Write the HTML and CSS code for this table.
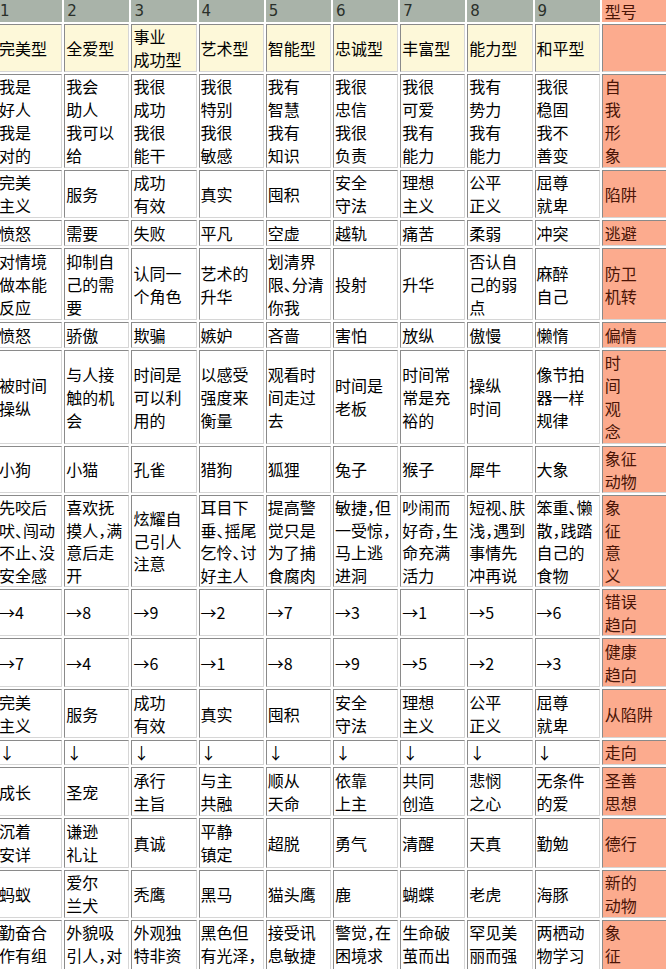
FILE: index.html
```html
<!DOCTYPE html>
<html lang="zh-CN">
<head>
<meta charset="utf-8">
<title>九型人格</title>
<link rel="stylesheet" href="styles.css">
</head>
<body>
<table class="grid">
<tr class="hd">
<td>1</td><td>2</td><td>3</td><td>4</td><td>5</td><td>6</td><td>7</td><td>8</td><td>9</td><td class="k">型号</td>
</tr>
<tr class="ty">
<td>完美型</td><td>全爱型</td><td>事业<br>成功型</td><td>艺术型</td><td>智能型</td><td>忠诚型</td><td>丰富型</td><td>能力型</td><td>和平型</td><td class="k"></td>
</tr>
<tr>
<td>我是<br>好人<br>我是<br>对的</td><td>我会<br>助人<br>我可以<br>给</td><td>我很<br>成功<br>我很<br>能干</td><td>我很<br>特别<br>我很<br>敏感</td><td>我有<br>智慧<br>我有<br>知识</td><td>我很<br>忠信<br>我很<br>负责</td><td>我很<br>可爱<br>我有<br>能力</td><td>我有<br>势力<br>我有<br>能力</td><td>我很<br>稳固<br>我不<br>善变</td><td class="k">自<br>我<br>形<br>象</td>
</tr>
<tr>
<td>完美<br>主义</td><td>服务</td><td>成功<br>有效</td><td>真实</td><td>囤积</td><td>安全<br>守法</td><td>理想<br>主义</td><td>公平<br>正义</td><td>屈尊<br>就卑</td><td class="k">陷阱</td>
</tr>
<tr class="a1">
<td>愤怒</td><td>需要</td><td>失败</td><td>平凡</td><td>空虚</td><td>越轨</td><td>痛苦</td><td>柔弱</td><td>冲突</td><td class="k">逃避</td>
</tr>
<tr class="a1">
<td>对情境<br>做本能<br>反应</td><td>抑制自<br>己的需<br>要</td><td>认同一<br>个角色</td><td>艺术的<br>升华</td><td>划清界<br>限、分清<br>你我</td><td>投射</td><td>升华</td><td>否认自<br>己的弱<br>点</td><td>麻醉<br>自己</td><td class="k">防卫<br>机转</td>
</tr>
<tr class="a1">
<td>愤怒</td><td>骄傲</td><td>欺骗</td><td>嫉妒</td><td>吝啬</td><td>害怕</td><td>放纵</td><td>傲慢</td><td>懒惰</td><td class="k">偏情</td>
</tr>
<tr>
<td>被时间<br>操纵</td><td>与人接<br>触的机<br>会</td><td>时间是<br>可以利<br>用的</td><td>以感受<br>强度来<br>衡量</td><td>观看时<br>间走过<br>去</td><td>时间是<br>老板</td><td>时间常<br>常是充<br>裕的</td><td>操纵<br>时间</td><td>像节拍<br>器一样<br>规律</td><td class="k">时<br>间<br>观<br>念</td>
</tr>
<tr class="s">
<td>小狗</td><td>小猫</td><td>孔雀</td><td>猎狗</td><td>狐狸</td><td>兔子</td><td>猴子</td><td>犀牛</td><td>大象</td><td class="k">象征<br>动物</td>
</tr>
<tr class="s">
<td>先咬后<br>吠、闯动<br>不止、没<br>安全感</td><td>喜欢抚<br>摸人，满<br>意后走<br>开</td><td>炫耀自<br>己引人<br>注意</td><td>耳目下<br>垂、摇尾<br>乞怜、讨<br>好主人</td><td>提高警<br>觉只是<br>为了捕<br>食腐肉</td><td>敏捷，但<br>一受惊，<br>马上逃<br>进洞</td><td>吵闹而<br>好奇，生<br>命充满<br>活力</td><td>短视、肤<br>浅，遇到<br>事情先<br>冲再说</td><td>笨重、懒<br>散，践踏<br>自己的<br>食物</td><td class="k">象<br>征<br>意<br>义</td>
</tr>
<tr class="s">
<td>→4</td><td>→8</td><td>→9</td><td>→2</td><td>→7</td><td>→3</td><td>→1</td><td>→5</td><td>→6</td><td class="k">错误<br>趋向</td>
</tr>
<tr class="a1">
<td>→7</td><td>→4</td><td>→6</td><td>→1</td><td>→8</td><td>→9</td><td>→5</td><td>→2</td><td>→3</td><td class="k">健康<br>趋向</td>
</tr>
<tr class="a1">
<td>完美<br>主义</td><td>服务</td><td>成功<br>有效</td><td>真实</td><td>囤积</td><td>安全<br>守法</td><td>理想<br>主义</td><td>公平<br>正义</td><td>屈尊<br>就卑</td><td class="k">从陷阱</td>
</tr>
<tr>
<td>↓</td><td>↓</td><td>↓</td><td>↓</td><td>↓</td><td>↓</td><td>↓</td><td>↓</td><td>↓</td><td class="k">走向</td>
</tr>
<tr class="a1">
<td>成长</td><td>圣宠</td><td>承行<br>主旨</td><td>与主<br>共融</td><td>顺从<br>天命</td><td>依靠<br>上主</td><td>共同<br>创造</td><td>悲悯<br>之心</td><td>无条件<br>的爱</td><td class="k">圣善<br>思想</td>
</tr>
<tr class="a2">
<td>沉着<br>安详</td><td>谦逊<br>礼让</td><td>真诚</td><td>平静<br>镇定</td><td>超脱</td><td>勇气</td><td>清醒</td><td>天真</td><td>勤勉</td><td class="k">德行</td>
</tr>
<tr>
<td>蚂蚁</td><td>爱尔<br>兰犬</td><td>秃鹰</td><td>黑马</td><td>猫头鹰</td><td>鹿</td><td>蝴蝶</td><td>老虎</td><td>海豚</td><td class="k">新的<br>动物</td>
</tr>
<tr class="last">
<td>勤奋合<br>作有组<br>织</td><td>外貌吸<br>引人，对<br>人忠诚</td><td>外观独<br>特非资<br>质平凡</td><td>黑色但<br>有光泽，<br>难驯服</td><td>接受讯<br>息敏捷<br>有智慧</td><td>警觉，在<br>困境求<br>生存</td><td>生命破<br>茧而出<br>很美丽</td><td>罕见美<br>丽而强<br>壮</td><td>两栖动<br>物学习<br>力强</td><td class="k">象<br>征<br>意</td>
</tr>
</table>
</body>
</html>
```
FILE: styles.css
```css
html, body {
  margin: 0;
  padding: 0;
  overflow: hidden;
  background: #ffffff;
}

.grid {
  border-collapse: separate;
  border-spacing: 2px;
  table-layout: fixed;
  width: 676px;
  margin: -4px 0 0 -6px;
  border: 1px solid #c8c8c8;
  font-family: "Noto Sans CJK SC", "Noto Sans", sans-serif;
  font-size: 16px;
  line-height: 23px;
  color: #000000;
  font-feature-settings: "halt";
}

.grid td {
  border-style: solid;
  border-width: 1px;
  border-color: #8a8a8a #d6d6d6 #d6d6d6 #8a8a8a;
  padding: 0 1px;
  vertical-align: middle;
  text-align: left;
  white-space: nowrap;
  background: #ffffff;
}

.grid .hd td {
  background: #a9b3a9;
  border-color: #a9b3a9;
  font-family: "DejaVu Sans", sans-serif;
  font-size: 15px;
  line-height: 20px;
  padding-top: 1px;
  padding-left: 2px;
  color: #2a302a;
}

.grid .ty td {
  background: #fdf8d9;
}

.grid .a1 td {
  padding-top: 1px;
}

.grid .a2 td {
  padding-top: 1px;
  padding-bottom: 1px;
}

.grid .s td {
  line-height: 22.5px;
}

.grid td.k {
  background: #fcab8e;
  color: #4a1406;
  padding-left: 2px;
  font-family: "Noto Sans CJK SC", sans-serif;
  font-size: 16px;
}

.grid .hd td.k {
  border-color: #fcab8e;
}

.grid .last td {
  vertical-align: top;
}
```
